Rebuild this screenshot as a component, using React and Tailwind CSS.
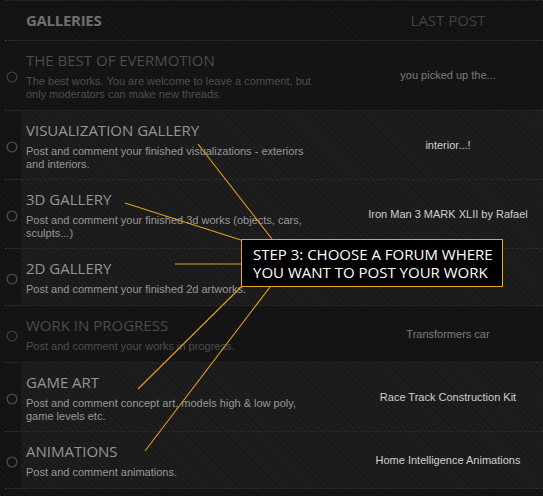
import React from "react";

const rows = [
  {
    title: "THE BEST OF EVERMOTION",
    desc: "The best works. You are welcome to leave a comment, but only moderators can make new threads.",
    last: "you picked up the...",
    dim: true,
    pb: "pb-[9px]",
  },
  {
    title: "VISUALIZATION GALLERY",
    desc: "Post and comment your finished visualizations - exteriors and interiors.",
    last: "interior...!",
    pb: "pb-[8px]",
  },
  {
    title: "3D GALLERY",
    desc: "Post and comment your finished 3d works (objects, cars, sculpts...)",
    last: "Iron Man 3 MARK XLII by Rafael",
    pb: "pb-[8px]",
  },
  {
    title: "2D GALLERY",
    desc: "Post and comment your finished 2d artworks.",
    last: "",
    pb: "pb-[9px]",
  },
  {
    title: "WORK IN PROGRESS",
    desc: "Post and comment your works in progress.",
    last: "Transformers car",
    dim: true,
    pb: "pb-[9px]",
  },
  {
    title: "GAME ART",
    desc: "Post and comment concept art, models high & low poly, game levels etc.",
    last: "Race Track Construction Kit",
    pb: "pb-[8px]",
  },
  {
    title: "ANIMATIONS",
    desc: "Post and comment animations.",
    last: "Home Intelligence Animations",
    pb: "pb-[9px]",
  },
];

function Sep() {
  return <div className="ml-[5px] h-px border-t border-dotted border-[#363636]" />;
}

function Row({ r }) {
  return (
    <div>
      <Sep />
      <div className="flex">
        <div className="w-[21px] flex items-center justify-center pl-[3px] pt-[3px]">
          <svg width="12" height="12" viewBox="0 0 12 12">
            <circle cx="6" cy="6" r="4.9" fill="none" stroke={r.dim ? "#3c3c3c" : "#4a4a4a"} strokeWidth="1.4" />
          </svg>
        </div>
        <div
          className={
            r.dim
              ? "flex flex-1 bg-[#141414]"
              : "flex flex-1 bg-[#1c1c1c] bg-[image:repeating-linear-gradient(45deg,#1e1e1e_0px,#1e1e1e_2px,#1a1a1a_2px,#1a1a1a_4px)]"
          }
        >
          <div className={"w-[332px] pl-[5px] pt-[9px] " + r.pb}>
            <div
              className={
                "text-[15px] leading-[20px] font-['Open_Sans',sans-serif] " +
                (r.dim ? "text-[#4c4c4c]" : "text-[#959595]")
              }
            >
              {r.title}
            </div>
            <div
              className={
                "mt-[5px] w-[292px] text-[11px] leading-[13px] font-['Liberation_Sans',Arial,sans-serif] " +
                (r.dim ? "text-[#4e4e4e]" : "text-[#989898]")
              }
            >
              {r.desc}
            </div>
          </div>
          <div
            className={
              "flex-1 flex items-center justify-center text-[11px] leading-[13px] font-['Liberation_Sans',Arial,sans-serif] " +
              (r.dim ? "text-[#7c7c7c]" : "text-[#d0d0d0]")
            }
          >
            {r.last}
          </div>
        </div>
      </div>
    </div>
  );
}

export default function App() {
  return (
    <div className="relative w-[543px] h-[496px] overflow-hidden bg-[#131313] bg-[image:repeating-linear-gradient(45deg,#151515_0px,#151515_2px,#121212_2px,#121212_4px)]">
      <div className="ml-[5px] h-px border-t border-dotted border-[#2e2e2e]" />
      <div className="flex h-[39px] pt-[9px] font-['Open_Sans',sans-serif] text-[15px] leading-[20px]">
        <div className="w-[353px] pl-[26px] font-bold text-[#6f6f6f] tracking-[-0.3px]">GALLERIES</div>
        <div className="flex-1 text-center text-[#414141]">LAST POST</div>
      </div>
      {rows.map((r) => (
        <Row key={r.title} r={r} />
      ))}
      <Sep />

      <svg
        className="absolute inset-0 pointer-events-none"
        width="543"
        height="496"
        viewBox="0 0 543 496"
      >
        <g stroke="#e2a01c" strokeWidth="1.1" fill="none">
          <line x1="198" y1="144" x2="272" y2="239" />
          <line x1="125" y1="203" x2="241" y2="240" />
          <line x1="175" y1="264" x2="241" y2="264" />
          <line x1="241" y1="287" x2="138" y2="389" />
          <line x1="270" y1="287" x2="145" y2="451" />
        </g>
      </svg>

      <div className="absolute left-[241px] top-[239px] w-[262px] h-[48px] bg-black border border-[#eba51a] pl-[11px] pt-[5px] font-['Open_Sans',sans-serif] text-[15px] leading-[18px] text-white">
        <div>STEP 3: CHOOSE A FORUM WHERE</div>
        <div>YOU WANT TO POST YOUR WORK</div>
      </div>
    </div>
  );
}
